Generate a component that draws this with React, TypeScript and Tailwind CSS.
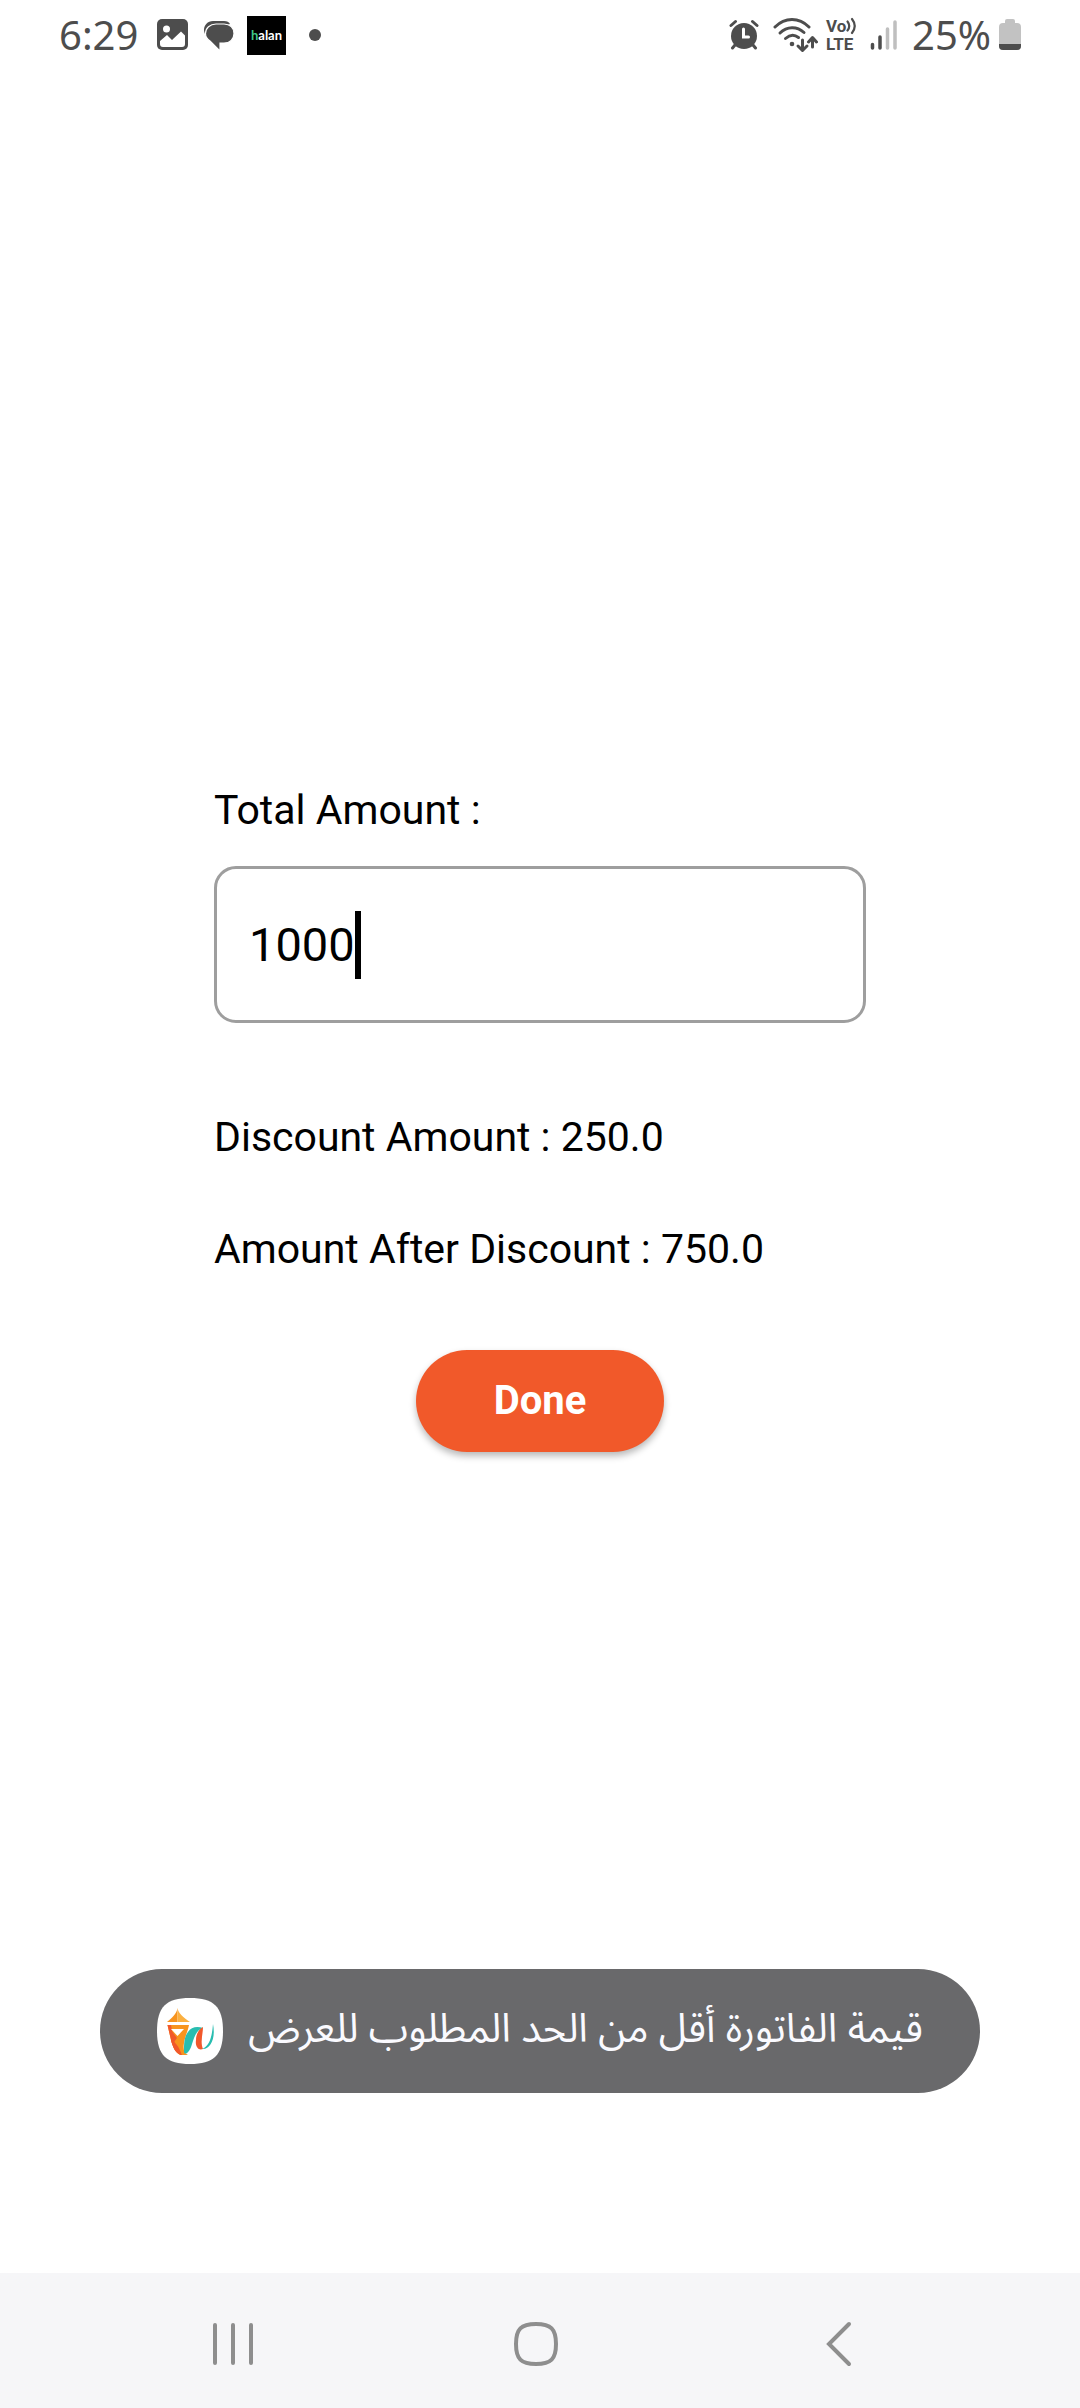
import { useState } from "react";

function StatusBar() {
  return (
    <header className="flex h-[70px] shrink-0 items-center justify-between px-[59px] font-['Noto_Sans',sans-serif] text-[40px] leading-[46px] text-[#4d4d4d]">
      <div className="flex items-center">
        <time className="w-[98px]">6:29</time>
        <svg className="h-8 w-8" viewBox="0 0 32 32" aria-label="Picture">
          <rect x="0" y="0" width="31" height="31" rx="5" fill="#4d4d4d" />
          <circle cx="9.500" cy="10" r="3.500" fill="#fff" />
          <path d="M3 25 V22 L10 16 L15 21 L24 12.500 L28 16.500 V25 Q28 28 25 28 H6 Q3 28 3 25Z" fill="#fff" />
        </svg>
        <svg className="ml-[14px] h-8 w-8" viewBox="0 0 32 32" aria-label="Messages">
          <path d="M2 15 C-1 9 3 2 10 2 H21 C24 2 26 3 27 5" fill="#4d4d4d" />
          <path d="M13 5 H21 C27 5 31 9 31 14.500 C31 20 27 24 21 24 H17 V32 L7 22 C4 20 2.500 17.500 2.500 14.500 C2.500 9 7 5 13 5Z" fill="#4d4d4d" stroke="#fff" strokeWidth="1.200" />
        </svg>
        <span className="ml-3 flex h-[39px] w-[39px] items-center justify-center bg-black font-['Lato',sans-serif] text-[13px] leading-[39px] font-bold text-white">
          <span className="text-[#3fc98a]">h</span>alan
        </span>
        <span className="ml-[23px] h-3 w-3 rounded-full bg-[#4d4d4d]" />
      </div>
      <div className="flex items-center">
        <svg className="h-8 w-[30px]" viewBox="0 0 30 32" aria-label="Alarm" stroke="#4d4d4d" strokeWidth="3" strokeLinecap="round" fill="none">
          <circle cx="15" cy="17" r="13" fill="#4d4d4d" stroke="none" />
          <path d="M2 6.500 L6.500 2.500 M23.500 2.500 L28 6.500 M6 26 L3.500 29 M24 26 L26.500 29" />
          <path d="M14.500 10 V18 H19.500" stroke="#fff" />
        </svg>
        <svg className="ml-[14px] h-9 w-[45px]" viewBox="0 0 45 36" aria-label="Wi-Fi" stroke="#4d4d4d" strokeWidth="3" strokeLinecap="round" strokeLinejoin="round" fill="none">
          <path d="M2 10 C12 0 26 0 36 10" />
          <path d="M7 16 C14 9 24 9 31 15.500" />
          <path d="M12.500 21.500 C17 17.500 21.500 17.500 25.500 20.500" />
          <circle cx="19" cy="27" r="2.300" fill="#4d4d4d" stroke="none" />
          <path d="M29.500 23 V33 M25 29 L29.500 33.500 L34 29" />
          <path d="M39.500 30 V21 M35.500 25 L39.500 20.500 L43.500 25" />
        </svg>
        <div className="ml-2 w-8 font-['Roboto',sans-serif] text-[17px] leading-[18px] font-bold">
          <div className="flex items-center">
            Vo
            <svg className="h-[18px] w-[11px] shrink-0" viewBox="0 0 11 18" stroke="#4d4d4d" strokeWidth="2.200" strokeLinecap="round" fill="none" aria-hidden="true">
              <path d="M1.500 4.500 Q5 9 1.500 13.500 M6 2 Q11.500 9 6 16" />
            </svg>
          </div>
          <div>LTE</div>
        </div>
        <svg className="ml-3 h-8 w-7" viewBox="0 0 28 32" aria-label="Signal" strokeWidth="3.500" strokeLinecap="round">
          <path d="M2.500 25.500 V29 M10 18 V29" stroke="#4d4d4d" />
          <path d="M17.500 10 V29 M25 3 V29" stroke="#bfbfbf" />
        </svg>
        <span className="ml-3.5">25%</span>
        <svg className="ml-2 h-8 w-[22px]" viewBox="0 0 22 32" aria-label="Battery">
          <path d="M6 4 V2 Q6 0 8 0 H14 Q16 0 16 2 V4 H18 Q22 4 22 8 V27 Q22 31 18 31 H4 Q0 31 0 27 V8 Q0 4 4 4Z" fill="#c2c2c2" />
          <path d="M0 25 H22 V27 Q22 31 18 31 H4 Q0 31 0 27Z" fill="#4d4d4d" />
        </svg>
      </div>
    </header>
  );
}

function AppLogo() {
  return (
    <svg className="h-[66px] w-[66px] shrink-0" viewBox="0 0 66 66" aria-hidden="true">
      <path d="M33 0 C57 0 66 9 66 33 C66 57 57 66 33 66 C9 66 0 57 0 33 C0 9 9 0 33 0Z" fill="#fff" />
      <path d="M20.500 10 C20 15 16 19 10 24 H20.500Z" fill="#f7941e" />
      <path d="M20.500 10 C21 15 26 19 33 24 H20.500Z" fill="#fbb040" />
      <path d="M10.500 27 H32 C31 33 28 38 27 45 C26 51 27 55 31 57 H25 C19 57 16 49 14 42Z" fill="#f7941e" />
      <path d="M10.500 27 H14 C16 39 18 51 25 57 C19 56 16 50 14 42Z" fill="#f1582b" />
      <path d="M14 32 L20 40 L17 44 C22 48 23 53 25 57 C19 56 16 50 14 42Z" fill="#f1582b" />
      <path d="M14 31 H27 L20.500 38Z" fill="#fff" />
      <path d="M27 54 C27 46 27 39 31 34 C34 29 40 28 46 30 C39 32 37 40 35 46 C33 54 28 58 27 54Z" fill="#28bdb0" />
      <path d="M46 29 C46 36 43 44 46 51 C41 53 38 48 39 42 C39 36 42 31 46 29Z" fill="#f1582b" />
      <path d="M45 51 C53 48 55 38 56 26 C59 41 53 52 45 51Z" fill="#28bdb0" />
    </svg>
  );
}

function NavBar() {
  return (
    <nav className="flex h-[135px] shrink-0 items-center justify-between bg-[#f6f6f8] pt-[7px] pr-[215px] pl-[211px]">
      <button type="button" aria-label="Recent apps" className="h-12 w-11">
        <svg className="h-12 w-11" viewBox="0 0 44 48" stroke="#8e8e8e" strokeWidth="4" strokeLinecap="round">
          <path d="M4 5 V43 M22 5 V43 M40 5 V43" />
        </svg>
      </button>
      <button type="button" aria-label="Home" className="h-12 w-12">
        <svg className="h-12 w-12" viewBox="0 0 48 48" stroke="#8e8e8e" strokeWidth="4" fill="none">
          <path d="M24 4 C39 4 44 9 44 24 C44 39 39 44 24 44 C9 44 4 39 4 24 C4 9 9 4 24 4Z" />
        </svg>
      </button>
      <button type="button" aria-label="Back" className="h-12 w-12">
        <svg className="h-12 w-12" viewBox="0 0 48 48" stroke="#8e8e8e" strokeWidth="4" strokeLinecap="round" strokeLinejoin="miter" fill="none">
          <path d="M32 4 L12 24 L32 44" />
        </svg>
      </button>
    </nav>
  );
}

export default function App() {
  const [amount, setAmount] = useState("1000");
  const discount = Number(amount) * 0.25;
  const rest = Number(amount) - discount;
  return (
    <div className="relative flex min-h-screen flex-col bg-white">
      <StatusBar />
      <main className="flex flex-1 flex-col px-[214px] pt-[716px] font-['Roboto',sans-serif] text-[41px] leading-[48px] text-black">
        <label htmlFor="total">Total Amount :</label>
        <div className="mt-8 flex h-[157px] items-center rounded-[22px] border-3 border-[#9e9e9e] pl-8">
          <input
            id="total"
            inputMode="numeric"
            value={amount}
            onChange={(e) => setAmount(e.target.value)}
            className="field-sizing-content bg-transparent text-[47px] leading-[68px] caret-transparent outline-none"
          />
          <span className="h-[68px] w-1.5 bg-black" aria-hidden="true" />
        </div>
        <p className="mt-[90px]">Discount Amount : {discount.toFixed(1)}</p>
        <p className="mt-16">Amount After Discount : {rest.toFixed(1)}</p>
        <button
          type="button"
          className="mt-[77px] self-center rounded-full bg-[#f1592a] px-[78px] py-[27px] text-[40px] leading-[48px] font-bold text-white shadow-[0_4px_7px_rgba(0,0,0,0.28)]"
        >
          Done
        </button>
      </main>
      <div
        role="status"
        className="absolute inset-x-[100px] bottom-[315px] flex h-[124px] items-center justify-between rounded-full bg-[#69696b] px-[57px]"
      >
        <AppLogo />
        <p dir="rtl" lang="ar" className="pb-2 font-['Noto_Sans','Noto_Sans_Arabic',sans-serif] text-[40px] leading-[56px] whitespace-nowrap text-[#fafaff]">
          قيمة الفاتورة أقل من الحد المطلوب للعرض
        </p>
      </div>
      <NavBar />
    </div>
  );
}
